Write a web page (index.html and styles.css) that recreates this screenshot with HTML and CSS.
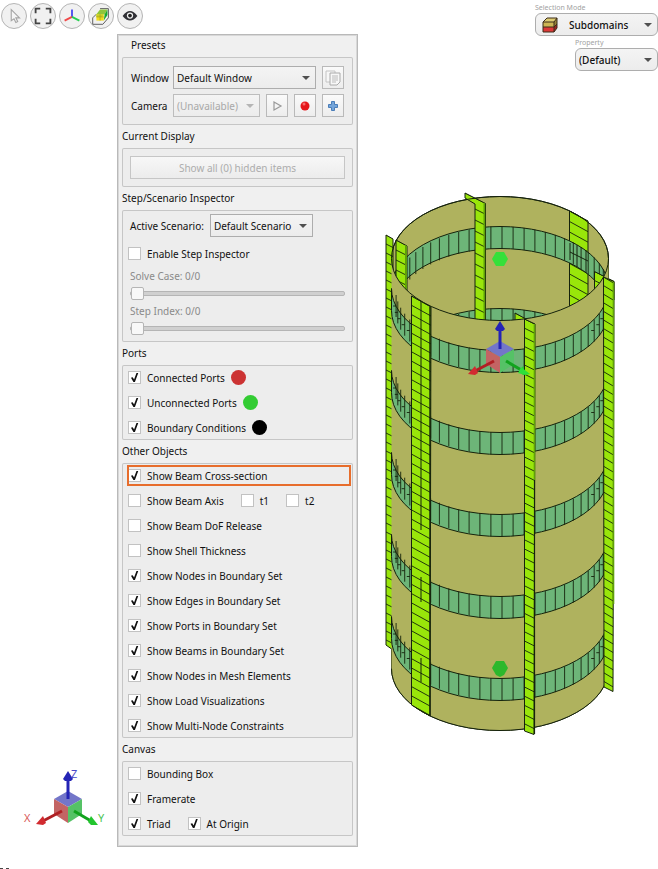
FILE: index.html
```html
<!DOCTYPE html>
<html lang="en">
<head>
<meta charset="utf-8">
<title>Model viewer</title>
<link rel="stylesheet" href="styles.css">
</head>
<body>
<svg class="defs" aria-hidden="true">
  <defs>
    <symbol id="triad" viewBox="0 0 74 60" overflow="visible">
      <path d="M37 20 51 28 37 36 23 28Z" fill="#7376c9"/>
      <path d="M23 28 37 36V52L23 43Z" fill="#c36464"/>
      <path d="M51 28 37 36V52L51 43Z" fill="#55c266"/>
      <path d="M37 28V7" stroke="#2424b5" stroke-width="3"/>
      <path d="M37 0 42 8 40 10H34L32 8Z" fill="#2424b5"/>
      <path d="M31 40 12 50" stroke="#b02024" stroke-width="3"/>
      <path d="M5 53 12 45 15 52 12 54Z" fill="#d22b30"/>
      <path d="M43 40 60 50" stroke="#12a31e" stroke-width="3"/>
      <path d="M67 54 60 45 57 51 60 54Z" fill="#22c52e"/>
    </symbol>
  </defs>
</svg>

<header class="topbar">
  <nav class="tools" aria-label="View tools">
    <button class="tool" aria-label="Select"><svg viewBox="0 0 26 26"><path d="M10 6V18L13 16 15 20 17 19 15 15H19Z" fill="#f5f5f5" stroke="#a5a5a5" stroke-width="1.2"/></svg></button>
    <button class="tool" aria-label="Fit view"><svg viewBox="0 0 26 26"><path d="M5 10V5H10M16 5H21V10M21 16V21H16M10 21H5V16" fill="none" stroke="#444" stroke-width="2"/></svg></button>
    <button class="tool" aria-label="Axes"><svg viewBox="0 0 26 26"><path d="M13 14V6" stroke="#4b4bf0" stroke-width="2"/><path d="M13 14 5 18" stroke="#f04848" stroke-width="2"/><path d="M13 14 21 18" stroke="#28cf50" stroke-width="2"/></svg></button>
    <button class="tool" aria-label="Section cut"><svg viewBox="0 0 26 26"><path d="M4 15 8 11M4 15V22H15L21 15V5H12" fill="none" stroke="#555"/><path d="M8 11 12 6H20L17 11Z" fill="#8ec63a"/><path d="M17 11 20 6V12L16 18Z" fill="#18a82c"/><path d="M8 11H16V18H8Z" fill="#f0dc1e"/><path d="M8 11H16L14 14H8Z" fill="#c5cf28"/><path d="M12 11V18M8 14H16" stroke="#a39a18" stroke-width=".7"/></svg></button>
    <button class="tool" aria-label="Visibility"><svg viewBox="0 0 26 26"><path d="M5 13Q13 2 21 13Q13 23 5 13Z" fill="#303035"/><circle cx="13" cy="12.500" r="3.400" fill="#eee"/><circle cx="13" cy="12.500" r="2" fill="#222"/></svg></button>
  </nav>
  <div class="pickers">
    <label class="pick-label" for="mode">Selection Mode</label>
    <div class="drop pick pick-mode">
      <svg class="cube" viewBox="0 0 16 16"><path d="M1 5 5 1H15L12 5Z" fill="#dccb72"/><path d="M1 5H12V10H1Z" fill="#cdb654"/><path d="M12 5 15 1V7L12 10Z" fill="#958237"/><path d="M1 10H12V15H1Z" fill="#dc3838"/><path d="M12 10 15 7V11L12 15Z" fill="#9c2424"/><path d="M1 5 5 1H15V11L12 15H1ZM1 5H12V15M12 5 15 1M1 10H12L15 7" fill="none" stroke="#3c2c18"/></svg>
      <select id="mode"><option>Subdomains</option></select>
    </div>
    <label class="pick-label pick-narrow" for="prop">Property</label>
    <div class="drop pick pick-narrow"><select id="prop"><option>(Default)</option></select></div>
  </div>
</header>

<main class="workspace">
  <div class="corner">
    <svg class="orientation" viewBox="0 0 90 60" role="img" aria-label="Orientation triad">
      <use href="#triad" x="8" y="0" width="74" height="60"/>
      <text x="1" y="51" fill="#d85a5a">X</text><text x="75" y="51" fill="#4cc455">Y</text><text x="48" y="7" fill="#4a4ac8">Z</text>
    </svg>
    <div class="cut-text"></div>
  </div>

  <form class="panel">
    <h2 class="first">Presets</h2>
    <section class="group presets">
      <div class="line"><label class="key" for="win">Window</label><div class="drop grow"><select id="win"><option>Default Window</option></select></div>
        <button type="button" class="mini" aria-label="Copy window"><svg viewBox="0 0 20 20"><path d="M3 3H12V14H3Z" fill="#f7f7f7" stroke="#c4c4c4"/><path d="M7 5H17V14L14 17H7Z" fill="#f7f7f7" stroke="#aaa"/><path d="M9 8H15M9 10H15M9 12H15M9 14H13" stroke="#bbb"/></svg></button></div>
      <div class="line"><label class="key" for="cam">Camera</label><div class="drop grow off"><select id="cam" disabled><option>(Unavailable)</option></select></div>
        <button type="button" class="mini" aria-label="Play"><svg viewBox="0 0 20 20"><path d="M7 6 14 10 7 14Z" fill="#f4f4f4" stroke="#999" stroke-width="1.200"/></svg></button>
        <button type="button" class="mini" aria-label="Record"><svg viewBox="0 0 20 20"><circle cx="10" cy="10" r="4.500" fill="#e5161a"/><circle cx="9" cy="8" r="1.500" fill="#f56a6a"/></svg></button>
        <button type="button" class="mini" aria-label="Add"><svg viewBox="0 0 20 20"><path d="M8.500 5.500H11.500V8.500H14.500V11.500H11.500V14.500H8.500V11.500H5.500V8.500H8.500Z" fill="#74a5da" stroke="#4a7db8"/></svg></button></div>
    </section>

    <h2>Current Display</h2>
    <section class="group display"><button type="button" class="wide" disabled>Show all (0) hidden items</button></section>

    <h2>Step/Scenario Inspector</h2>
    <section class="group stepper">
      <div class="line scenario"><label for="scen">Active Scenario:</label><div class="drop"><select id="scen"><option>Default Scenario</option></select></div></div>
      <div class="row"><label><input type="checkbox">Enable Step Inspector</label></div>
      <label class="dim" for="solve">Solve Case: 0/0</label>
      <input id="solve" type="range" min="0" max="100" value="0" disabled>
      <label class="dim" for="step">Step Index: 0/0</label>
      <input id="step" type="range" min="0" max="100" value="0" disabled>
    </section>

    <h2>Ports</h2>
    <section class="group">
      <div class="row"><label><input type="checkbox" checked>Connected Ports<i class="dot red"></i></label></div>
      <div class="row"><label><input type="checkbox" checked>Unconnected Ports<i class="dot green"></i></label></div>
      <div class="row"><label><input type="checkbox" checked>Boundary Conditions<i class="dot black"></i></label></div>
    </section>

    <h2>Other Objects</h2>
    <section class="group">
      <div class="row marked"><label><input type="checkbox" checked>Show Beam Cross-section</label></div>
      <div class="row"><label><input type="checkbox">Show Beam Axis</label><label><input type="checkbox">t1</label><label><input type="checkbox">t2</label></div>
      <div class="row"><label><input type="checkbox">Show Beam DoF Release</label></div>
      <div class="row"><label><input type="checkbox">Show Shell Thickness</label></div>
      <div class="row"><label><input type="checkbox" checked>Show Nodes in Boundary Set</label></div>
      <div class="row"><label><input type="checkbox" checked>Show Edges in Boundary Set</label></div>
      <div class="row"><label><input type="checkbox" checked>Show Ports in Boundary Set</label></div>
      <div class="row"><label><input type="checkbox" checked>Show Beams in Boundary Set</label></div>
      <div class="row"><label><input type="checkbox" checked>Show Nodes in Mesh Elements</label></div>
      <div class="row"><label><input type="checkbox" checked>Show Load Visualizations</label></div>
      <div class="row"><label><input type="checkbox" checked>Show Multi-Node Constraints</label></div>
    </section>

    <h2>Canvas</h2>
    <section class="group">
      <div class="row"><label><input type="checkbox">Bounding Box</label></div>
      <div class="row"><label><input type="checkbox" checked>Framerate</label></div>
      <div class="row"><label><input type="checkbox" checked>Triad</label><label><input type="checkbox" checked>At Origin</label></div>
    </section>
  </form>

  <div class="scene">
    <svg id="model" viewBox="358 34 300 813" role="img" aria-label="Stiffened cylinder model"></svg>
  </div>
</main>
<script src="model.js"></script>
</body>
</html>
```
FILE: styles.css
```css
* { box-sizing: border-box; }
body {
  margin: 0;
  min-height: 100vh;
  display: flex;
  flex-direction: column;
  background: #fff;
  color: #111;
  font: 10px/16px "Noto Sans", "Open Sans", sans-serif;
  overflow: hidden;
}
button, select, input { font: inherit; color: inherit; margin: 0; }
svg { display: block; }
.defs { position: absolute; width: 0; height: 0; }

.topbar { position: relative; height: 34px; padding: 3px 1px; }
.tools { display: flex; gap: 3px; }
.tool {
  width: 26px; height: 26px; padding: 0;
  border: 1px solid #b4b4b4; border-radius: 50%;
  background: #f1f1f1;
}
.tool svg { width: 24px; height: 24px; }

.pickers {
  position: absolute; top: 2px; right: 0; z-index: 1;
  width: 123px;
  display: flex; flex-direction: column; align-items: stretch;
}
.pick-label { font-size: 7px; line-height: 11px; color: #a2a2a2; }
.pick-narrow { margin-left: 40px; }
.pick { height: 23px; border: 1px solid #a9a9a9; border-radius: 6px; font-weight: 500; }
.pick-mode { padding-left: 6px; margin-bottom: 1px; }
.drop.pick-mode select { padding-left: 11px; }
.cube { width: 16px; height: 16px; flex: none; }

.drop {
  position: relative;
  display: flex; align-items: center;
  height: 23px;
  border: 1px solid #adadad;
  background: linear-gradient(#f4f4f4, #ececec);
}
.drop.pick { border-radius: 6px; }
.drop::after {
  content: ""; position: absolute; right: 5px; top: 9px;
  border: 4px solid transparent; border-top-color: #505050; border-bottom: 0;
  pointer-events: none;
}
.drop select {
  appearance: none; width: 100%; height: 100%;
  border: 0; padding: 0 16px 0 3px; background: none; outline: 0;
}
.drop.off { color: #a8a8a8; border-color: #bdbdbd; }
.drop.off::after { border-top-color: #b5b5b5; }
.drop select:disabled { opacity: 1; }
.grow { flex: 1; min-width: 0; }

.workspace { display: flex; flex: 1; align-items: flex-start; }
.corner {
  width: 117px; align-self: stretch;
  display: flex; flex-direction: column; justify-content: flex-end;
}
.orientation { width: 90px; height: 60px; margin: 0 0 36px 23px; overflow: visible; font-size: 11px; }
.cut-text { width: 9px; height: 2px; border-bottom: 1px dashed #444; }

.panel {
  width: 241px; height: auto; flex: none;
  padding: 0 5px 11px;
  background: #f0f0f0;
  box-shadow: inset 0 0 0 1px #b9b9b9, inset 0 0 0 2px #d8d8d8;
}
h2 { margin: 0; font-size: 10px; line-height: 23px; font-weight: 400; }
h2.first { padding-left: 9px; }
.group { background: #ededed; box-shadow: inset 0 0 0 1px #c6c6c6; border-radius: 2px; }
.presets { padding: 9px 9px 8px; display: grid; gap: 5px; }
.line { display: flex; align-items: center; gap: 6px; }
.key { width: 36px; white-space: nowrap; }
.mini {
  width: 22px; height: 23px; padding: 0; flex: none;
  border: 1px solid #b9b9b9; background: linear-gradient(#fafafa, #ededed);
}
.mini svg { width: 20px; height: 20px; }
.display { padding: 8px; }
.wide {
  display: block; width: 100%; height: 23px; padding: 0;
  border: 1px solid #c6c6c6; background: linear-gradient(#f7f7f7, #ececec);
  color: #adadad;
}
.stepper { padding: 4px 8px 6px; display: flex; flex-direction: column; }
.scenario { margin-bottom: 4px; }
.scenario select { padding-right: 20px; }
.dim { line-height: 20px; color: #8a8a8a; }
.stepper .row { padding-left: 0; margin-left: -2px; }

.row { display: flex; align-items: center; gap: 17px; height: 25px; padding-left: 6px; }
.row label { display: flex; align-items: center; gap: 6px; white-space: nowrap; }
.marked { height: 19px; margin: 0 3px 0 6px; padding: 0; outline: 2px solid #e76d2c; outline-offset: -1px; }
.group:has(.marked) { padding-top: 3px; }
.marked + .row { margin-top: 3px; }

input[type="checkbox"] {
  appearance: none; width: 13px; height: 13px; flex: none;
  border: 1px solid #c2c2c2; background: #fff;
}
input[type="checkbox"]:checked::before {
  content: ""; display: block; width: 11px; height: 11px;
  background: #111;
  clip-path: polygon(18% 52%, 34% 48%, 46% 68%, 68% 10%, 84% 10%, 54% 92%, 40% 92%);
}

input[type="range"] { appearance: none; width: 100%; height: 15px; background: none; }
input[type="range"]::-webkit-slider-runnable-track {
  height: 5px; border: 1px solid #b5b5b5; border-radius: 2px; background: #d0d0d0;
}
input[type="range"]::-webkit-slider-thumb {
  appearance: none; width: 13px; height: 13px; margin-top: -5px;
  border: 1px solid #b5b5b5; border-radius: 2px; background: #f8f8f8;
}

.dot { width: 15px; height: 15px; border-radius: 50%; }
.red { background: #cc3333; }
.green { background: #33cc33; }
.black { background: #000; }

.scene { flex: 1; min-width: 0; }
.scene svg { width: 100%; }
```
FILE: model.js
```js
// Draws the stiffened cylinder: shell, ring bands and vertical plates, back to front.
const CX = 500, RX = 108.5, RY = 62, TOP = 258.5, BOTTOM = 668.5;
const SHELL = "#afb25e", BAND = "#6db578", PLATE = "#99e60a", DARK = "#5f9f08", INK = "#15220c";
const out = [];
let clips = 0;

const path = (d, fill, stroke = "none", w = 1) =>
  out.push(`<path d="${d}" fill="${fill}" stroke="${stroke}" stroke-width="${w}"/>`);

// Ring band. side = 1 is the near half, -1 the far half.
function band(cy, side) {
  const h = 22, l = CX - RX, r = CX + RX, sweep = side > 0 ? 0 : 1;
  path(`M${l} ${cy}A${RX} ${RY} 0 0 ${sweep} ${r} ${cy}V${cy + h}A${RX} ${RY} 0 0 ${1 - sweep} ${l} ${cy + h}Z`, BAND, INK);
  let d = "";
  for (let a = 6; a < 180; a += 6) {
    const t = a * Math.PI / 180;
    const x = CX + 2 + (RX - 2) * Math.cos(t), y = cy + side * RY * Math.sin(t);
    d += `M${x.toFixed(1)} ${y.toFixed(1)}v${h}`;
    if (side > 0 && (a < 36 || a > 146)) d += `m-3 -11h3`;
  }
  path(d, "none", INK, 0.9);
}

// Plate seen edge-on, with mesh lines running down to the right.
function plate(pts, step, slope, mid, darkEdge) {
  const id = "plate" + clips++;
  const xs = pts.map(p => p[0]), ys = pts.map(p => p[1]);
  const x0 = Math.min(...xs), x1 = Math.max(...xs), y0 = Math.min(...ys), y1 = Math.max(...ys);
  const d = "M" + pts.map(p => p.join(" ")).join("L") + "Z";
  let lines = "";
  for (let y = y0; y < y1; y += step) lines += `M${x0} ${y}L${x1} ${y + (x1 - x0) * slope}`;
  out.push(`<clipPath id="${id}"><path d="${d}"/></clipPath>`);
  path(d, PLATE, INK);
  out.push(`<g clip-path="url(#${id})">`);
  path(lines, "none", INK, 0.9);
  if (mid) path(mid, "none", INK, 1);
  if (darkEdge) path(`M${x1 - 1} ${y0}V${y1}`, "none", DARK, 2);
  out.push("</g>");
}

// Far side
path(`M${CX - RX} ${TOP}A${RX} ${RY} 0 0 1 ${CX + RX} ${TOP}V${BOTTOM}A${RX} ${RY} 0 0 1 ${CX - RX} ${BOTTOM}Z`, SHELL, INK);
plate([[569.5, 211], [588, 221], [588, 310], [569.5, 310]], 10.5, 0.55);
band(288.5, -1);
path("M570 243V260M577 245V267M586 250V273M570 252 588 261", "none", INK);
band(370.5, -1);
plate([[465, 193], [485.5, 203.5], [485.5, 325], [475, 325], [475, 204], [465, 198]], 11, 0.5, "", true);
plate([[386, 235], [393, 239], [393, 650], [386, 645]], 9, 0.5);
plate([[396, 240], [407, 246], [407, 300], [396, 285]], 10, 0.5, "", true);
plate([[594.5, 271.5], [614, 281.5], [614, 300], [594.5, 300]], 9, 0.5);
plate([[515, 313], [535, 324], [535, 340], [515, 330]], 9, 0.5);

// Near side
path(`M${CX - RX} ${TOP}A${RX} ${RY} 0 0 0 ${CX + RX} ${TOP}V${BOTTOM}A${RX} ${RY} 0 0 1 ${CX - RX} ${BOTTOM}Z`, SHELL);
path(`M${CX - RX} ${TOP}A${RX} ${RY} 0 0 0 ${CX + RX} ${TOP}A${RX} ${RY} 0 0 0 ${CX - RX} ${TOP}`, "none", INK);
path(`M${CX - RX} ${BOTTOM}A${RX} ${RY} 0 0 0 ${CX + RX} ${BOTTOM}`, "none", INK);
for (let i = 0; i < 5; i++) band(288.5 + i * 82, 1);
plate([[411.5, 296], [431, 307], [430, 716], [411.5, 705]], 9.3, 0.55, "M421 300V530M421 577V602M421 658V682");
path("M430 307V716", "none", INK, 1.4);
out.push('<use href="#triad" x="463" y="321" width="74" height="60"/>');
plate([[524.5, 319], [535, 324], [534, 734.5], [524.5, 731]], 9.2, 0.5);
path("M534.500 324V480", "none", DARK, 1.6);
path("M534.500 480V734", "none", INK, 1.2);
out.push('<path d="M521 367 530 374 525 375 518 373Z" fill="#2de03a"/>');
plate([[603.5, 277], [614, 281.5], [613, 691.5], [604, 687]], 8.6, 0.6);
path("M613.500 282V604", "none", DARK, 1.6);

// Ports
path("M492 259 496 252H504L508 259 504 266H496Z", "#35e03a");
path("M492 668 496 661H504L508 668 504 675 500 677 496 675Z", "#2cb82c");

document.getElementById("model").innerHTML = out.join("");
```
